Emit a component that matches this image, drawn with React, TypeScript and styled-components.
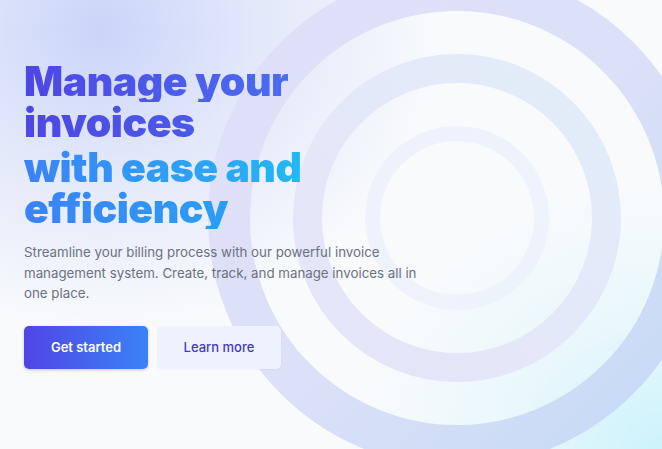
import React from "react";
import styled, { createGlobalStyle } from "styled-components";

const Global = createGlobalStyle`
  html, body { margin: 0; padding: 0; }
  body { font-family: Inter, "Noto Sans", sans-serif; background: #f8fafc; }
  * { box-sizing: border-box; }
`;

const Hero = styled.section`
  position: relative;
  width: 662px;
  height: 449px;
  overflow: hidden;
  background:
    radial-gradient(ellipse 340px 300px at 100px 30px, rgba(184, 198, 248, 0.72) 0%, rgba(200, 209, 248, 0.45) 45%, rgba(248, 250, 252, 0) 100%),
    radial-gradient(ellipse 300px 260px at 662px 449px, rgba(190, 240, 252, 0.75) 0%, rgba(210, 244, 252, 0.4) 50%, rgba(248, 250, 252, 0) 100%),
    #f8fafc;
`;

const Rings = styled.svg`
  position: absolute;
  inset: 0;
  width: 662px;
  height: 449px;
  pointer-events: none;
`;

const Content = styled.div`
  position: relative;
  display: flex;
  flex-direction: column;
  align-items: flex-start;
  padding: 61px 24px 0 24px;
`;

const Title = styled.h1`
  margin: 0;
  font-family: Inter, "Noto Sans", sans-serif;
  font-weight: 900;
  font-size: 41px;
  line-height: 41px;
  letter-spacing: -0.012em;
`;

const TitleLine = styled.span<{ $from: string; $to: string; $gap?: number }>`
  display: block;
  width: fit-content;
  margin-top: ${(p) => p.$gap ?? 0}px;
  background: linear-gradient(90deg, ${(p) => p.$from}, ${(p) => p.$to});
  -webkit-background-clip: text;
  background-clip: text;
  color: transparent;
`;

const Lead = styled.p`
  margin: 13px 0 0 0;
  max-width: 400px;
  font-size: 13.3px;
  line-height: 20.5px;
  color: #6b7280;
`;

const Actions = styled.div`
  display: flex;
  gap: 9px;
  margin-top: 22px;
`;

const Button = styled.button<{ $primary?: boolean }>`
  width: 124px;
  height: 43px;
  border: none;
  border-radius: 5px;
  font-family: Inter, "Noto Sans", sans-serif;
  font-size: 13px;
  font-weight: ${(p) => (p.$primary ? 600 : 500)};
  color: ${(p) => (p.$primary ? "#ffffff" : "#4338ca")};
  background: ${(p) =>
    p.$primary ? "linear-gradient(90deg, #4f46e5, #3b82f6)" : "#eef2ff"};
  box-shadow: ${(p) =>
    p.$primary ? "0 1px 3px rgba(79, 70, 229, 0.3)" : "0 1px 2px rgba(99, 102, 241, 0.06)"};
  cursor: pointer;
`;

export default function App() {
  return (
    <>
      <Global />
      <Hero>
        <Rings viewBox="0 0 662 449">
          <defs>
            <linearGradient id="g1" x1="0" y1="0" x2="1" y2="1">
              <stop offset="0" stopColor="#dfe0f7" />
              <stop offset="0.5" stopColor="#dce1f7" />
              <stop offset="1" stopColor="#c3d9f6" />
            </linearGradient>
            <linearGradient id="g2" x1="0" y1="1" x2="1" y2="0">
              <stop offset="0" stopColor="#e5e4f8" />
              <stop offset="1" stopColor="#e2edf9" />
            </linearGradient>
            <linearGradient id="g3" x1="0" y1="0" x2="1" y2="1">
              <stop offset="0" stopColor="#eff2fc" />
              <stop offset="1" stopColor="#edf3fc" />
            </linearGradient>
          </defs>
          <circle cx="457" cy="218" r="228" fill="none" stroke="url(#g1)" strokeWidth="42" />
          <circle cx="457" cy="218" r="149.5" fill="none" stroke="url(#g2)" strokeWidth="29" />
          <circle cx="457" cy="218" r="84.5" fill="none" stroke="url(#g3)" strokeWidth="15" />
        </Rings>
        <Content>
          <Title>
            <TitleLine $from="#4f46e5" $to="#4a6cf0">Manage your</TitleLine>
            <TitleLine $from="#4f46e5" $to="#4a5ae9">invoices</TitleLine>
            <TitleLine $from="#3b82f6" $to="#22b8f2" $gap={4}>with ease and</TitleLine>
            <TitleLine $from="#3b82f6" $to="#2a9ef3">efficiency</TitleLine>
          </Title>
          <Lead>
            Streamline your billing process with our powerful invoice management system. Create, track, and manage invoices all in one place.
          </Lead>
          <Actions>
            <Button $primary>Get started</Button>
            <Button>Learn more</Button>
          </Actions>
        </Content>
      </Hero>
    </>
  );
}
